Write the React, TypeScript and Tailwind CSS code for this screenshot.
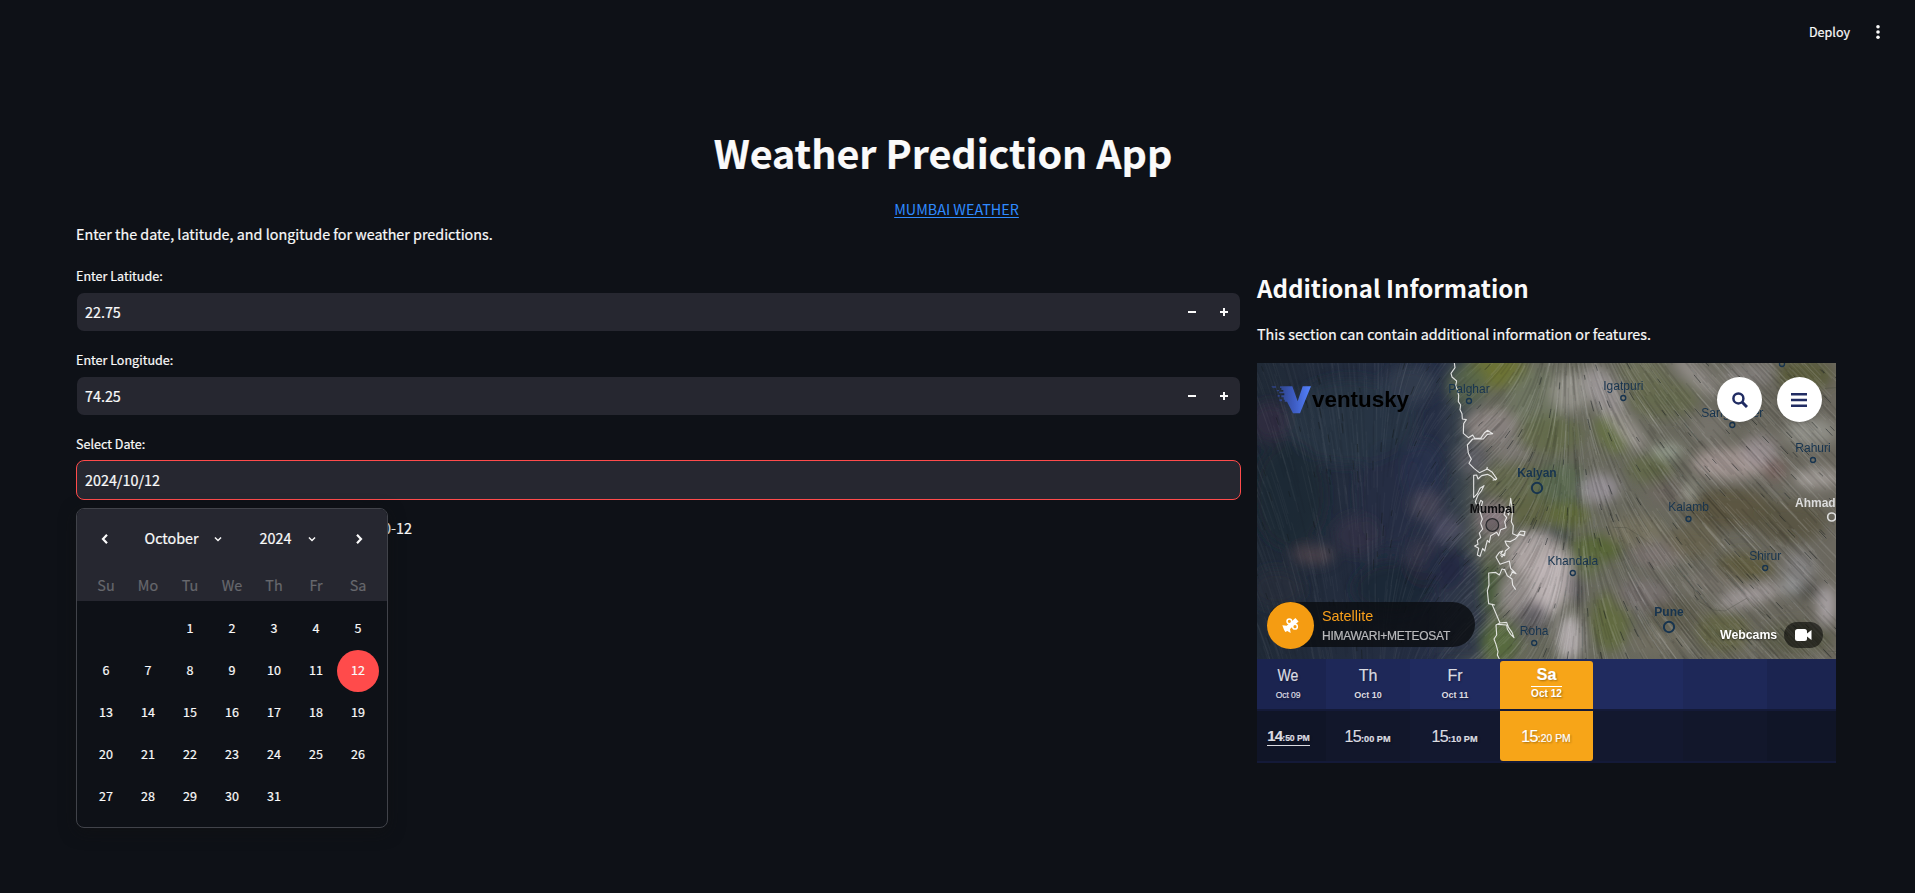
import React from "react";

const SANS = "font-['Noto_Sans_CJK_JP','Noto_Sans_CJK_SC',sans-serif]";
const ARIAL = "font-['Liberation_Sans',sans-serif]";

/* ---------- wind map ---------- */

type Blob = [number, number, number, number, string, number, number?];

// cx, cy, rx, ry, colour, opacity, rotation
const BLOBS: Blob[] = [
  [300, 200, 200, 130, "#2a3747", 0.7],
  [60, 200, 60, 60, "#382f42", 0.6],
  [480, 90, 80, 60, "#333f50", 0.8],
  [120, 420, 110, 160, "#1c2632", 0.7],
  [420, 420, 100, 160, "#272f45", 0.6],
  [520, 350, 60, 90, "#2a3350", 0.7],
  [530, 450, 50, 45, "#4a4859", 0.8],
  [590, 520, 50, 40, "#55526a", 0.7],
  [190, 600, 65, 30, "#4f444d", 0.8],
  [320, 540, 70, 60, "#353448", 0.6],
  [520, 620, 60, 70, "#37374b", 0.8],
  [430, 700, 120, 80, "#1d2736", 0.8],
  [80, 700, 80, 60, "#272f3c", 0.7],
  [580, 640, 60, 60, "#1f2740", 0.7],
  [740, 50, 100, 50, "#6c7430", 0.85],
  [650, 90, 60, 60, "#59674c", 0.8],
  [860, 130, 90, 90, "#6f7861", 0.8],
  [960, 110, 60, 60, "#9c9a93", 0.8],
  [720, 210, 80, 50, "#8f8684", 0.9],
  [670, 310, 50, 50, "#64626c", 0.7],
  [790, 260, 80, 60, "#827c7a", 0.7],
  [900, 240, 100, 60, "#636c48", 0.8],
  [800, 380, 100, 60, "#656b4c", 0.8],
  [930, 390, 80, 70, "#55684d", 0.8],
  [840, 470, 90, 50, "#5f6544", 0.9],
  [960, 480, 60, 40, "#5f6b33", 0.8],
  [730, 490, 50, 50, "#8c7d84", 0.9],
  [890, 540, 80, 20, "#384443", 0.9],
  [850, 600, 80, 70, "#b3a8a8", 0.9],
  [900, 690, 60, 110, "#c3b9bb", 0.9, 20],
  [800, 720, 50, 60, "#9b9494", 0.8],
  [850, 790, 50, 50, "#5c5a60", 0.8],
  [960, 850, 40, 70, "#b5aeb0", 0.9],
  [978, 690, 20, 60, "#48464c", 0.9],
  [725, 700, 28, 80, "#4a5e3a", 0.9],
  [750, 860, 55, 60, "#546a3a", 0.9],
  [1080, 800, 60, 90, "#606c3c", 0.8],
  [1040, 580, 80, 40, "#53642f", 0.85],
  [1010, 620, 50, 50, "#616e46", 0.7],
  [1050, 400, 60, 45, "#98929a", 0.85],
  [1090, 230, 50, 70, "#647240", 0.8, -30],
  [1060, 110, 45, 85, "#a09a9c", 0.85, -30],
  [1130, 220, 80, 26, "#aaa4a3", 0.8, 50],
  [1240, 130, 110, 60, "#656a4c", 0.8],
  [1180, 50, 80, 40, "#6c7054", 0.7],
  [1340, 60, 90, 30, "#a19b99", 0.7, 40],
  [1250, 290, 45, 22, "#a2ac9e", 0.85],
  [1200, 340, 70, 45, "#606a42", 0.7],
  [1440, 325, 115, 46, "#a99b99", 0.85],
  [1530, 285, 55, 45, "#9c9296", 0.8],
  [1575, 345, 35, 32, "#7c625f", 0.7],
  [1380, 220, 60, 50, "#7a766f", 0.7],
  [1660, 60, 90, 50, "#575936", 0.9],
  [1500, 60, 80, 40, "#868180", 0.7],
  [1680, 230, 80, 45, "#96968e", 0.8],
  [1700, 370, 70, 30, "#a6a09e", 0.8],
  [1320, 410, 16, 34, "#b0b2a5", 0.8],
  [1250, 410, 60, 40, "#706762", 0.6],
  [1440, 460, 130, 60, "#57523c", 0.8],
  [1620, 500, 110, 60, "#55513d", 0.8],
  [1160, 530, 90, 50, "#7e7864", 0.6],
  [1220, 600, 80, 40, "#847b7b", 0.7],
  [1330, 560, 80, 50, "#666048", 0.7],
  [1480, 640, 90, 45, "#5c593a", 0.8],
  [1380, 680, 90, 40, "#79736c", 0.7],
  [1500, 722, 100, 28, "#a39c9e", 0.85, -15],
  [1650, 640, 50, 50, "#868588", 0.7],
  [1680, 710, 55, 22, "#46463f", 0.8],
  [1620, 695, 28, 26, "#a0a2a6", 0.7],
  [1730, 750, 28, 60, "#aea7ab", 0.9],
  [1180, 720, 90, 50, "#7a7274", 0.7],
  [1280, 780, 90, 50, "#5c584a", 0.7],
  [1230, 860, 90, 40, "#737063", 0.7],
  [1420, 830, 80, 60, "#60633a", 0.7],
  [1640, 850, 110, 50, "#575942", 0.7],
];

const TILT: [number, number][] = [
  [0, -22], [200, -12], [380, 0], [520, 28], [640, 48], [740, 44],
  [860, 22], [960, 2], [1060, -18], [1200, -34], [1400, -42], [1760, -44],
];

function tiltAt(x: number, y: number): number {
  const shifted = x < 600 ? x : x - (y - 450) * 0.06;
  for (let i = 1; i < TILT.length; i++) {
    if (shifted <= TILT[i][0]) {
      const [x0, a0] = TILT[i - 1];
      const [x1, a1] = TILT[i];
      return a0 + ((a1 - a0) * (shifted - x0)) / (x1 - x0);
    }
  }
  return -44;
}

function makeRandom(seed: number) {
  let s = seed;
  return () => {
    s = (s * 1664525 + 1013904223) % 4294967296;
    return s / 4294967296;
  };
}

function trace(x: number, y: number, length: number): string {
  const steps = 5;
  let d = `M${x.toFixed(0)} ${y.toFixed(0)}`;
  for (let i = 0; i < steps; i++) {
    const a = (tiltAt(x, y) * Math.PI) / 180;
    x += (Math.sin(a) * length) / steps;
    y -= (Math.cos(a) * length) / steps;
    d += `L${x.toFixed(1)} ${y.toFixed(1)}`;
  }
  return d;
}

const random = makeRandom(77);

// Each streak is its own path, so that overlapping ones build up softly.
const field = (n: number, min: number, span: number) =>
  Array.from({ length: n }, () => trace(random() * 1780, 24 + random() * 1000, min + random() * span));

const lightSoft = field(1200, 70, 110);
const darkSoft = field(1000, 70, 110);
const darkHeads = field(260, 14, 20).join("");

const COAST = [
  "M613 24L615 38L603 55L606 66L620 78L617 92L622 104L626 122L625 140L632 150L630 164L636 176L637 192L649 194L641 206L640 235L655 248L668 240L674 250L692 250L703 234L712 226L728 236L712 238L700 252L668 252L652 270L655 295L664 313L657 325L672 340L688 353L712 342L727 352L740 371L736 375L724 364L712 358L695 362L684 372L680 360L671 361L671 428L682 416L690 400L702 392L694 408L684 420L676 440L684 458L692 436L698 440L690 470L697 492L692 505L698 522L688 534L692 548L682 556L684 568L674 573L686 580L682 600L690 604L698 580L704 588L712 556L718 562L722 542L740 532L746 542L752 524L768 518L764 500L770 488L762 478L768 460L776 480L782 430L788 468L784 500L790 512L788 536L802 542L812 528L825 530L822 542L808 538L796 552L780 560L765 558L770 570L778 578L766 588L764 602L752 596L758 588L748 592L738 606L750 628L778 618L782 640L790 648L780 664",
  "M740 372L728 376M710 344L712 336",
  "M797 704L788 690L786 672L772 662L764 644L756 642L748 660L736 652L716 654L717 690L712 708L716 746L734 750L726 748L750 804L738 810L740 840L732 852L738 868L744 890L742 900L748 912M750 804L770 802L776 818L786 832L792 848L782 838L772 822L770 810L744 808",
  "M752 600L756 606L764 594M784 650L798 656L790 648",
];

interface Place {
  name: string;
  x: number;
  y: number;
  dot: number;
  bold?: boolean;
}

const PLACES: Place[] = [
  { name: "Palghar", x: 212, y: 26, dot: 38 },
  { name: "Igatpuri", x: 366.3, y: 23, dot: 35 },
  { name: "Sangamner", x: 475.3, y: 50, dot: 62 },
  { name: "Rahuri", x: 556, y: 85, dot: 97 },
  { name: "Kalyan", x: 280, y: 110, dot: 125, bold: true },
  { name: "Kalamb", x: 431.5, y: 144, dot: 156 },
  { name: "Khandala", x: 315.8, y: 198, dot: 210 },
  { name: "Shirur", x: 508.2, y: 193, dot: 205 },
  { name: "Roha", x: 277.2, y: 268, dot: 280 },
  { name: "Pune", x: 412, y: 249, dot: 264, bold: true },
];

function MapCanvas() {
  return (
    <svg className="absolute inset-0 h-[296px] w-[579px]" viewBox="21 24 1737 888" preserveAspectRatio="none">
      <defs>
        <linearGradient id="ground" x1="21" x2="1758" y1="0" y2="0" gradientUnits="userSpaceOnUse">
          <stop offset="0" stopColor="#202a37" />
          <stop offset=".31" stopColor="#262f45" />
          <stop offset=".35" stopColor="#39434c" />
          <stop offset=".40" stopColor="#67695c" />
          <stop offset="1" stopColor="#6b685f" />
        </linearGradient>
        <linearGradient id="fade" x1="21" x2="1758" y1="0" y2="0" gradientUnits="userSpaceOnUse">
          <stop offset="0" stopColor="#fff" stopOpacity=".36" />
          <stop offset=".3" stopColor="#fff" stopOpacity=".42" />
          <stop offset=".42" stopColor="#fff" />
        </linearGradient>
        <mask id="shore" maskUnits="userSpaceOnUse" x="21" y="24" width="1737" height="888">
          <rect x="21" y="24" width="1737" height="888" fill="url(#fade)" />
        </mask>
        <filter id="soft" x="-20%" y="-20%" width="140%" height="140%">
          <feGaussianBlur stdDeviation="17" />
        </filter>
        <filter id="haze">
          <feGaussianBlur stdDeviation="1.8" />
        </filter>
      </defs>
      <rect x="21" y="24" width="1737" height="888" fill="url(#ground)" />
      <g filter="url(#soft)">
        <path d="M560 912L640 912L700 912L720 700L680 620L600 560L560 700Z" fill="#2b3348" opacity=".8" />
        {BLOBS.map(([cx, cy, rx, ry, fill, opacity, turn = 0], i) => (
          <ellipse key={i} cx={cx} cy={cy} rx={rx} ry={ry} fill={fill} opacity={opacity} transform={`rotate(${turn} ${cx} ${cy})`} />
        ))}
      </g>
      <g mask="url(#shore)">
        <g fill="none" strokeLinecap="round" filter="url(#haze)">
          {darkSoft.map((d, i) => (
            <path key={i} d={d} stroke="#10151a" strokeOpacity=".08" strokeWidth="5" />
          ))}
          {lightSoft.map((d, i) => (
            <path key={i} d={d} stroke="#ededed" strokeOpacity=".085" strokeWidth="3.6" />
          ))}
        </g>
      </g>
      <g fill="none">
        <path d={darkHeads} stroke="#151b1d" strokeOpacity=".5" strokeWidth="3" />
        <path d="M1090 517L1130 518L1180 550L1210 575M1270 630L1285 650L1330 700L1340 735L1390 765L1425 768L1490 730L1510 755L1560 790M1610 55L1625 70L1660 85M1725 100L1758 98M1735 888L1758 890" stroke="#3a3d33" strokeOpacity=".4" strokeWidth="2" />
      </g>
      <g fill="none" stroke="#f4f4f4" strokeOpacity=".88" strokeWidth="3.4" strokeLinejoin="round">
        {COAST.map((d) => (
          <path key={d} d={d} />
        ))}
      </g>
      <g fill="none" stroke="#17344f">
        {PLACES.map((p) => (
          <circle key={p.name} cx={(p.x + 7) * 3} cy={(p.dot + 8) * 3} r={p.bold ? 15.5 : 7.5} strokeWidth={p.bold ? 6 : 4} />
        ))}
        <circle cx="1596" cy="27" r="7.5" strokeWidth="4" />
      </g>
      <circle cx="727" cy="510" r="19" fill="#000" fillOpacity=".18" stroke="#2b2b2e" strokeWidth="4" />
      <circle cx="1745" cy="486" r="12" fill="none" stroke="#dedede" strokeWidth="5" />
    </svg>
  );
}

function VentuskyLogo() {
  return (
    <div className="absolute left-[14px] top-[20px] flex items-center">
      <svg className="h-[32px] w-[41px]" viewBox="63 86 123 96">
        <defs>
          <linearGradient id="vee" x1="80" x2="183" y1="0" y2="0" gradientUnits="userSpaceOnUse">
            <stop offset="0" stopColor="#2c4080" />
            <stop offset=".5" stopColor="#3d5cc2" />
            <stop offset="1" stopColor="#5583ff" />
          </linearGradient>
        </defs>
        <path d="M90 93H127L143 138L158 93H183L150 174H129L111 139H104V133H101V126H94V120H103V114H88V109H100V104H94V98H90Z" fill="url(#vee)" />
        <path d="M64 93h14v4h-10zM80 104h7v4h-6zM83 119h6v5h-6zM88 132h8v6h-7z" fill="#2f4388" />
      </svg>
      <span className="mt-px text-[22.4px] font-bold leading-[32px] text-black">ventusky</span>
    </div>
  );
}

function WindMap() {
  return (
    <div className="relative h-[296px] w-full overflow-hidden">
      <MapCanvas />
      {PLACES.map((p) => (
        <span
          key={p.name}
          className={`absolute -translate-x-1/2 -translate-y-1/2 text-[12px] leading-4 text-[#17344f] ${p.bold ? "font-bold" : ""}`}
          style={{ left: p.x, top: p.y }}
        >
          {p.name}
        </span>
      ))}
      <span className="absolute left-[235.5px] top-[146px] -translate-x-1/2 -translate-y-1/2 text-[12px] font-bold leading-4 text-[#0c0c0e]">Mumbai</span>
      <span className="absolute left-[538px] top-[132px] text-[12px] font-bold leading-4 text-[#dcdcdc]">Ahmad</span>
      <VentuskyLogo />
      <button className="absolute left-[460px] top-[14px] flex size-[45px] items-center justify-center rounded-full bg-white shadow-md">
        <svg className="size-4" viewBox="0 0 16 16" fill="none" stroke="#212c63">
          <circle cx="6.4" cy="6.4" r="5" strokeWidth="2.5" />
          <path d="M10 10L15 15" strokeWidth="3" />
        </svg>
      </button>
      <button className="absolute left-[520px] top-[14px] flex size-[45px] items-center justify-center rounded-full bg-white shadow-md">
        <svg className="mr-px mt-px h-[14px] w-4" viewBox="0 0 16 14" fill="#212c63">
          <path d="M0 0h16v2.4H0zM0 5.8h16v2.4H0zM0 11.6h16V14H0z" />
        </svg>
      </button>
      <div className="absolute left-[10px] top-[239px] flex h-[45px] w-[208px] rounded-full bg-[#0a0c10]/80">
        <span className="flex size-[47px] shrink-0 items-center justify-center rounded-full bg-[#f59c12]">
          <svg className="size-[17px]" viewBox="98 786 51 51" fill="none" stroke="#fff">
            <path d="M115 819L143 794" strokeWidth="14" />
            <circle cx="120" cy="799" r="7" strokeWidth="4.5" fill="#f59c12" />
            <circle cx="137" cy="815" r="7" strokeWidth="4.5" fill="#f59c12" />
            <path d="M99 811L112 812L122 822L124 834L114 828L108 831L104 824Z" fill="#fff" stroke="none" />
          </svg>
        </span>
        <span className="ml-2 flex flex-col">
          <span className="mt-[5px] text-[14.4px] leading-[18px] text-[#f9a01b]">Satellite</span>
          <span className="mt-[3px] text-[12px] leading-4 tracking-[-0.27px] text-[#b9b9bc] [-webkit-text-stroke:0.2px]">HIMAWARI+METEOSAT</span>
        </span>
      </div>
      <div className="absolute left-[463px] top-[259px] flex h-[26px] items-center">
        <span className="-mt-px w-[64px] text-[12.3px] font-bold leading-4 text-white [text-shadow:0_1px_2px_rgba(0,0,0,.6)]">Webcams</span>
        <span className="flex h-[26px] w-[39px] items-center justify-center rounded-full bg-black/55">
          <svg className="h-[12px] w-[17px]" viewBox="0 0 17 12" fill="#fff">
            <rect width="12" height="12" rx="2.5" />
            <path d="M12 4.5L16.5 1V11L12 7.5Z" />
          </svg>
        </span>
      </div>
    </div>
  );
}

/* ---------- forecast timeline ---------- */

interface Slot {
  day: string;
  date: string;
  hour: string;
  rest: string;
  width: string;
  head: string;
  body: string;
  state?: "current" | "active";
}

const SLOTS: Slot[] = [
  { day: "We", date: "Oct 09", hour: "14", rest: ":50 PM", width: "w-[69px]", head: "bg-[#1b2450]", body: "bg-[#101527]", state: "current" },
  { day: "Th", date: "Oct 10", hour: "15", rest: ":00 PM", width: "w-[84px]", head: "bg-[#1e2858]", body: "bg-[#12172b]" },
  { day: "Fr", date: "Oct 11", hour: "15", rest: ":10 PM", width: "w-[90px]", head: "bg-[#202b5f]", body: "bg-[#13182f]" },
  { day: "Sa", date: "Oct 12", hour: "15", rest: ":20 PM", width: "w-[93px]", head: "bg-[#f7a518]", body: "bg-[#f7a518]", state: "active" },
  { day: "", date: "", hour: "", rest: "", width: "w-[90px]", head: "bg-[#202b5f]", body: "bg-[#13182f]" },
  { day: "", date: "", hour: "", rest: "", width: "w-[84px]", head: "bg-[#1e2858]", body: "bg-[#12172b]" },
  { day: "", date: "", hour: "", rest: "", width: "w-[69px]", head: "bg-[#1b2450]", body: "bg-[#101527]" },
];

function Timeline() {
  return (
    <div className="flex h-[104px] w-full flex-col bg-[#141a38] text-[#dcdce2] [text-shadow:1px_1px_2px_rgba(0,0,0,.35)]">
      <div className="flex h-[50px] bg-[#202b5f]">
        {SLOTS.map((s, i) => (
          <div
            key={i}
            className={`flex shrink-0 flex-col items-center ${s.width} ${s.head} ${
              s.state === "active" ? "mt-[2px] h-[48px] rounded-t-[3px] text-white" : "pt-[2px]"
            } ${s.state === "current" ? "pr-[7px]" : ""}`}
          >
            <span
              className={`text-[16px] leading-[20px] [-webkit-text-stroke:0.2px] ${s.state === "active" ? "mt-[4px] font-bold" : "mt-[5px]"} ${
                s.state === "current" ? "scale-x-[.88]" : ""
              }`}
            >
              {s.day}
            </span>
            <span
              className={`leading-[11px] ${
                s.state === "active"
                  ? "mt-px h-[13px] border-t border-white pt-px text-[10.1px] font-bold"
                  : s.state === "current"
                    ? "mt-[2px] pt-[2px] text-[8.6px] tracking-[-0.1px] [-webkit-text-stroke:0.2px]"
                    : "mt-[2px] pt-[2px] text-[9px] font-bold"
              }`}
            >
              {s.date}
            </span>
          </div>
        ))}
      </div>
      <div className="mt-[2px] flex h-[50px]">
        {SLOTS.map((s, i) => (
          <div
            key={i}
            className={`flex shrink-0 items-center justify-center pt-[3px] ${s.width} ${s.body} ${s.state === "active" ? "rounded-b-[3px] text-white" : ""} ${
              s.state === "current" ? "pr-[6px]" : "pr-px"
            }`}
          >
            {s.hour && (
              <span
                className={`[-webkit-text-stroke:0.2px] ${
                  s.state === "current"
                    ? "border-b border-[#dcdce2] text-[15px] font-bold leading-[14px] tracking-[-0.8px]"
                    : "text-[16px] leading-5 tracking-[-0.6px]"
                }`}
              >
                {s.hour}
                <span
                  className={
                    s.state === "current"
                      ? "text-[8.7px] font-bold tracking-[-0.1px]"
                      : s.state === "active"
                        ? "text-[10.4px] tracking-normal"
                        : "text-[9.2px] font-bold tracking-normal"
                  }
                >
                  {s.rest}
                </span>
              </span>
            )}
          </div>
        ))}
      </div>
    </div>
  );
}

/* ---------- form ---------- */

function Field({ label, value }: { label: string; value: string }) {
  return (
    <div className="flex h-[84px] flex-col">
      <label className="h-[24px] text-[12.55px] leading-[20px]">{label}</label>
      <div className="mx-px mt-[3px] flex h-[38px] items-center rounded-[7px] bg-[#262730] pl-2">
        <span className="flex-1 text-[14.35px] leading-6">{value}</span>
        <svg className="h-[38px] w-16" viewBox="0 0 64 38" fill="#fafafa">
          <path d="M12 18h8v2h-8zM44 18h8v2h-8zM47 15h2v8h-2z" />
        </svg>
      </div>
    </div>
  );
}

const WEEKDAYS = ["Su", "Mo", "Tu", "We", "Th", "Fr", "Sa"];

function Chevron({ d, className, width = 2 }: { d: string; className: string; width?: number }) {
  return (
    <svg className={className} viewBox="0 0 10 10" fill="none" stroke="#fafafa" strokeWidth={width}>
      <path d={d} />
    </svg>
  );
}

function Calendar() {
  const cells = Array.from({ length: 35 }, (_, i) => i - 1);
  return (
    <div className="absolute left-0 top-[48px] h-[320px] w-[312px] overflow-hidden rounded-[8px] border border-[#41434a] bg-[#0e1117] shadow-[0_4px_16px_rgba(18,18,18,.5)]">
      <div className="h-[92px] bg-[#262730]">
        <div className="flex h-[60px] items-center">
          <Chevron className="ml-[23px] size-[10px]" d="M7 0.8L3 5L7 9.2" width={2.2} />
          <span className="-mt-[2px] ml-[34.5px] w-[69px] text-[14.35px] leading-6">October</span>
          <Chevron className="size-[8px]" d="M1.2 3L5 6.8L8.8 3" width={1.8} />
          <span className="-mt-[2px] ml-[38px] w-[48px] text-[14.35px] leading-6">2024</span>
          <Chevron className="size-[8px]" d="M1.2 3L5 6.8L8.8 3" width={1.8} />
          <Chevron className="ml-[38px] size-[10px]" d="M3 0.8L7 5L3 9.2" width={2.2} />
        </div>
        <div className="grid h-[32px] grid-cols-[repeat(7,42px)] pl-2 text-center text-[14.35px] leading-[31px] text-[#67686d]">
          {WEEKDAYS.map((d) => (
            <span key={d}>{d}</span>
          ))}
        </div>
      </div>
      <div className="grid grid-cols-[repeat(7,42px)] auto-rows-[42px] pl-2 pt-[7px] text-center text-[12.55px] leading-[40px]">
        {cells.map((n) => (
          <span key={n} className={n === 12 ? "rounded-full bg-[#ff4b4b]" : ""}>
            {n > 0 && n <= 31 ? n : ""}
          </span>
        ))}
      </div>
    </div>
  );
}

export default function App() {
  return (
    <div className={`h-[893px] w-[1915px] overflow-hidden bg-[#0e1117] text-[#fafafa] [-webkit-text-stroke:0.2px] ${SANS}`}>
      <header className="flex h-[64px] items-center justify-end pr-[34px]">
        <span className="text-[12.55px] leading-5">Deploy</span>
        <svg className="ml-[25px] h-4 w-[6px]" viewBox="0 0 6 16" fill="#fafafa">
          <circle cx="3" cy="2.7" r="1.8" />
          <circle cx="3" cy="8" r="1.8" />
          <circle cx="3" cy="13.3" r="1.8" />
        </svg>
      </header>
      <main className="px-[76px] pt-[56px]">
        <h1 className="h-[64px] pr-[29px] text-center text-[39.4px] font-bold leading-[64px]">Weather Prediction App</h1>
        <div className="mt-[13px] h-[25px] pr-[2px] text-center text-[14.35px] leading-6 text-[#2f8bff] [-webkit-text-stroke:0px]">
          <a className="underline underline-offset-2">MUMBAI WEATHER</a>
        </div>
        <p className="h-6 text-[14.33px] leading-6">Enter the date, latitude, and longitude for weather predictions.</p>
        <div className="mt-5 flex gap-4">
          <section className="w-[1165px]">
            <Field label="Enter Latitude:" value="22.75" />
            <Field label="Enter Longitude:" value="74.25" />
            <label className="block h-[26px] text-[12.55px] leading-[20px]">Select Date:</label>
            <div className="relative flex h-[40px] items-center rounded-[8px] border border-[#ff4b4b] bg-[#262730] pl-2 text-[14.35px] leading-6">
              <span>2024/10/12</span>
            </div>
            <div className="relative h-6 pl-[307px] pt-[16px] text-[14.35px] leading-6">
              0-12
              <div className="absolute left-0 top-[-40px]">
                <Calendar />
              </div>
            </div>
          </section>
          <aside className="w-[579px]">
            <h2 className="mt-[2px] h-[40px] text-[24.1px] font-bold leading-[39px] [-webkit-text-stroke:0px]">Additional Information</h2>
            <p className="mb-[17px] mt-[14px] h-6 text-[14.35px] leading-6">This section can contain additional information or features.</p>
            <div className={`[-webkit-text-stroke:0px] ${ARIAL}`}>
              <WindMap />
              <Timeline />
            </div>
          </aside>
        </div>
      </main>
    </div>
  );
}
